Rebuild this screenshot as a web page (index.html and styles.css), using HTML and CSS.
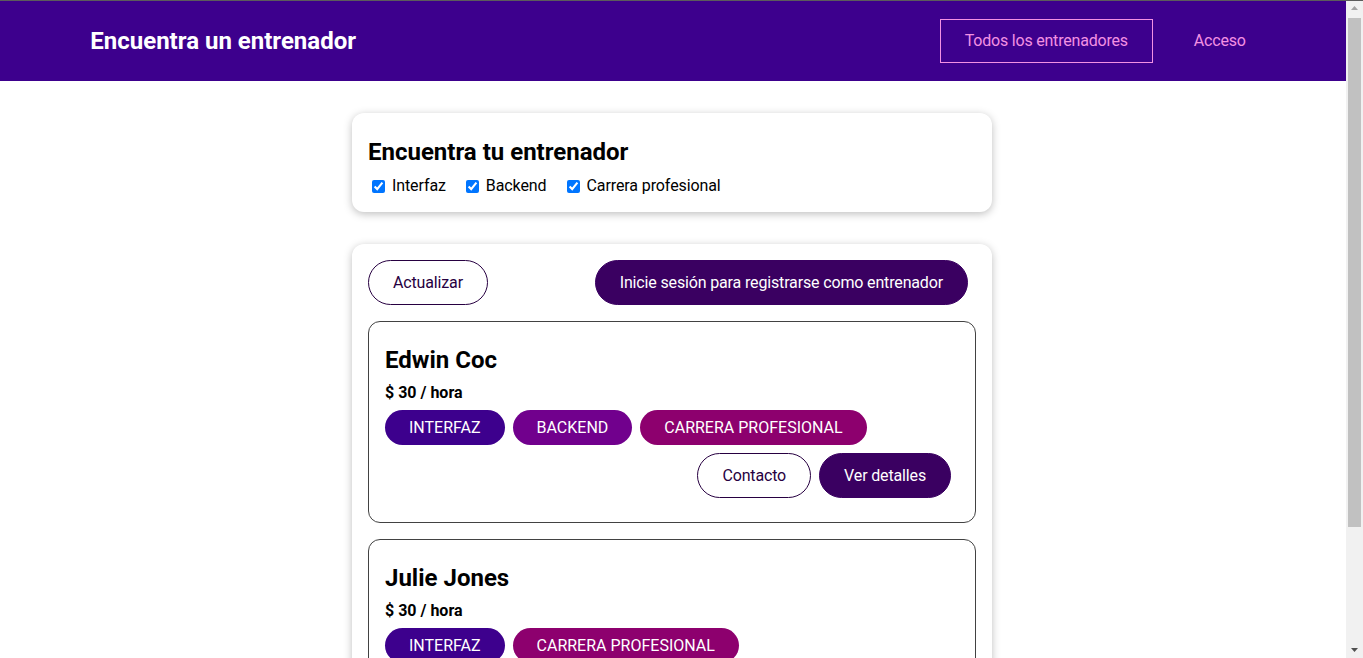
FILE: index.html
```html
<!DOCTYPE html>
<html lang="es">
<head>
<meta charset="utf-8">
<title>Encuentra un entrenador</title>
<link rel="stylesheet" href="styles.css">
</head>
<body>
<div class="viewport">
<div class="page">
<header class="site-header">
  <nav class="nav">
    <h1 class="brand"><a href="#">Encuentra un entrenador</a></h1>
    <ul class="nav-links">
      <li><a href="#" class="nav-link active">Todos los entrenadores</a></li>
      <li><a href="#" class="nav-link">Acceso</a></li>
    </ul>
  </nav>
</header>
<main>
  <section class="card">
    <h2 class="filter-title">Encuentra tu entrenador</h2>
    <div class="filters">
      <span class="filter-option"><input type="checkbox" id="frontend" checked><label for="frontend">Interfaz</label></span>
      <span class="filter-option"><input type="checkbox" id="backend" checked><label for="backend">Backend</label></span>
      <span class="filter-option"><input type="checkbox" id="career" checked><label for="career">Carrera profesional</label></span>
    </div>
  </section>
  <section class="card">
    <div class="controls">
      <a href="#" class="btn outline">Actualizar</a>
      <a href="#" class="btn">Inicie sesión para registrarse como entrenador</a>
    </div>
    <ul class="coach-list">
      <li class="coach">
        <h3 class="coach-name">Edwin Coc</h3>
        <h4 class="coach-rate">$ 30 / hora</h4>
        <div class="badges">
          <span class="badge frontend">INTERFAZ</span>
          <span class="badge backend">BACKEND</span>
          <span class="badge career">CARRERA PROFESIONAL</span>
        </div>
        <div class="actions">
          <a href="#" class="btn outline">Contacto</a>
          <a href="#" class="btn">Ver detalles</a>
        </div>
      </li>
      <li class="coach">
        <h3 class="coach-name">Julie Jones</h3>
        <h4 class="coach-rate">$ 30 / hora</h4>
        <div class="badges">
          <span class="badge frontend">INTERFAZ</span>
          <span class="badge career">CARRERA PROFESIONAL</span>
        </div>
        <div class="actions">
          <a href="#" class="btn outline">Contacto</a>
          <a href="#" class="btn">Ver detalles</a>
        </div>
      </li>
    </ul>
  </section>
</main>
</div>
<div class="scrollbar" aria-hidden="true">
  <div class="sb-button"><svg width="7" height="4" viewBox="0 0 7 4"><polygon points="0,4 3.5,0 7,4" fill="#a3a3a3"/></svg></div>
  <div class="sb-track"><div class="sb-thumb"></div></div>
  <div class="sb-button sb-down"><svg width="7" height="4" viewBox="0 0 7 4"><polygon points="0,0 7,0 3.5,4" fill="#505050"/></svg></div>
</div>
</div>
</body>
</html>
```

FILE: styles.css
```css
* { box-sizing: border-box; }

html {
  font-family: Roboto, "Liberation Sans", sans-serif;
  overflow: hidden;
}

body {
  margin: 0;
  border-top: 1px solid #5c5c5c;
}

.viewport {
  display: flex;
  height: calc(100vh - 1px);
}

.page {
  flex: 1;
  min-width: 0;
  overflow: hidden;
}

.scrollbar {
  width: 17px;
  flex: none;
  background: #f1f1f1;
  display: flex;
  flex-direction: column;
}

.sb-button {
  height: 17px;
  display: flex;
  justify-content: center;
  align-items: center;
  padding-bottom: 4px;
}

.sb-down {
  padding-bottom: 0;
  padding-top: 1px;
}

.sb-track {
  flex: 1;
  padding: 0 2px;
}

.sb-thumb {
  height: 509px;
  background: #c1c1c1;
}

.site-header {
  width: 100%;
  height: 80px;
  background-color: #3d008d;
  display: flex;
  justify-content: center;
  align-items: center;
}

.nav {
  width: 90%;
  margin: auto;
  display: flex;
  justify-content: space-between;
  align-items: center;
}

.brand {
  margin: 0 0 0 -2px;
  font-size: 24px;
}

.brand a {
  color: #fff;
  text-decoration: none;
  display: inline-block;
  padding: 12px 24px;
  border: 1px solid transparent;
}

.nav-links {
  list-style: none;
  margin: 0;
  padding: 0;
  display: flex;
  align-items: center;
}

.nav-links li { margin: 0 8px; }

.nav-link {
  text-decoration: none;
  color: #f391e3;
  display: inline-block;
  padding: 12px 24px;
  border: 1px solid transparent;
  font-size: 16px;
  line-height: 18px;
  letter-spacing: -0.2px;
}

.nav-link.active { border-color: #f391e3; }

main { padding-right: 2px; }

.card {
  border-radius: 12px;
  box-shadow: 0 2px 8px rgba(0, 0, 0, 0.26);
  padding: 16px;
  margin: 32px auto;
  max-width: 640px;
  background: #fff;
}

.filter-title {
  margin: 8px 0;
  font-size: 24px;
  line-height: 30px;
}

.filters {
  display: flex;
  align-items: center;
  line-height: 20px;
  padding-top: 1px;
}

.filter-option {
  margin-right: 16px;
  display: flex;
  align-items: center;
}

.filter-option input { margin: 3px 3px 3px 4px; }

.filter-option label {
  margin-left: 4px;
  letter-spacing: -0.1px;
}

.controls {
  display: flex;
  justify-content: space-between;
}

.btn {
  text-decoration: none;
  padding: 12px 24px;
  font: inherit;
  line-height: 19px;
  background-color: #3a0061;
  border: 1px solid #3a0061;
  color: #fff;
  border-radius: 30px;
  margin-right: 8px;
  display: inline-block;
  letter-spacing: -0.15px;
}

.btn.outline {
  background-color: transparent;
  border-color: #270041;
  color: #270041;
}

.coach-list {
  list-style: none;
  margin: 0;
  padding: 0;
}

.coach {
  margin: 16px 0;
  border: 1px solid #424242;
  border-radius: 12px;
  padding: 16px;
}

.coach-name {
  font-size: 24px;
  line-height: 29px;
  margin: 8px 0;
}

.coach-rate {
  font-size: 16px;
  margin: 8px 0;
}

.badges { margin: 8px 0; }

.badge {
  border-radius: 30px;
  padding: 8px 24px;
  line-height: 19px;
  display: inline-block;
  margin-right: 4px;
  color: #fff;
}

.badge.frontend { background-color: #3d008d; }
.badge.backend { background-color: #71008d; }
.badge.career { background-color: #8d006e; }

.actions {
  margin: 8px 0;
  display: flex;
  justify-content: flex-end;
}
```
